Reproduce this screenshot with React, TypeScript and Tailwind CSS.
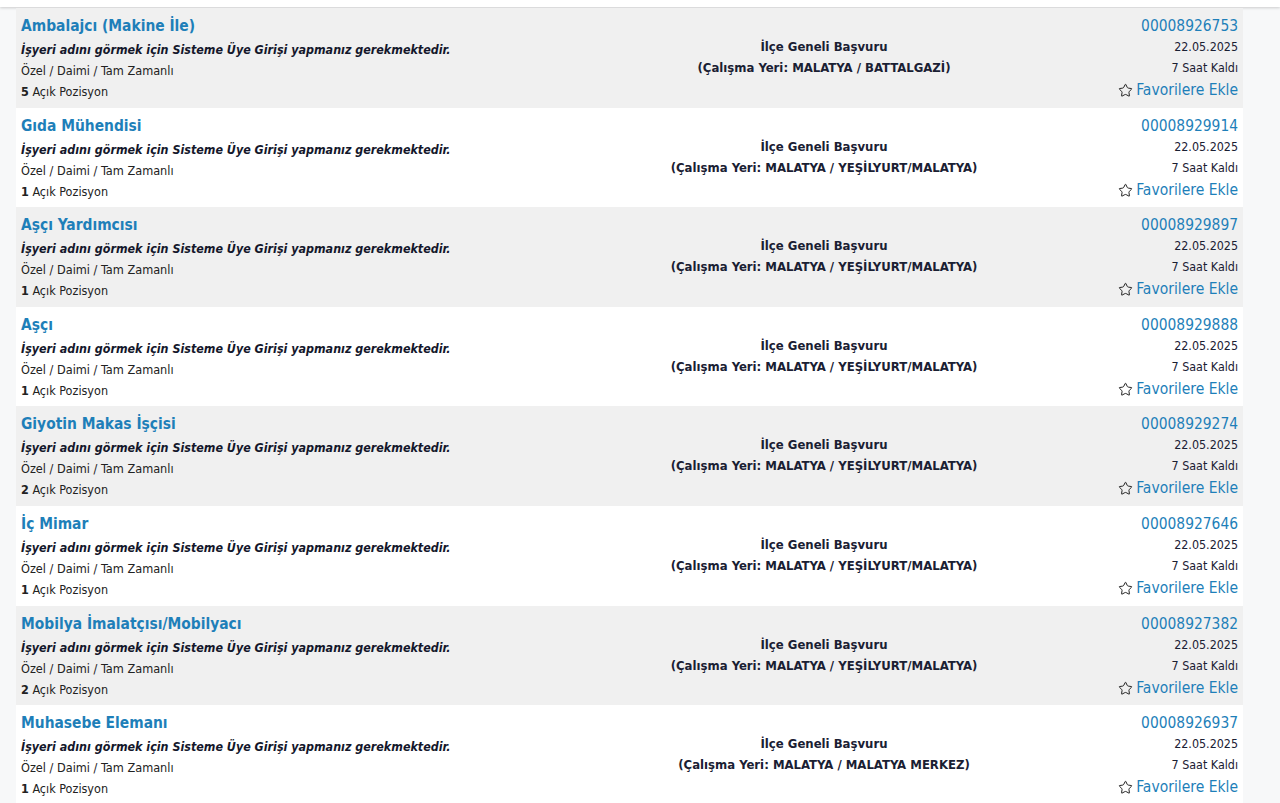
import { Star } from "lucide-react";

type Job = {
  title: string;
  count: number;
  place: string;
  id: string;
};

const JOBS: Job[] = [
  { title: "Ambalajcı (Makine İle)", count: 5, place: "MALATYA / BATTALGAZİ", id: "00008926753" },
  { title: "Gıda Mühendisi", count: 1, place: "MALATYA / YEŞİLYURT/MALATYA", id: "00008929914" },
  { title: "Aşçı Yardımcısı", count: 1, place: "MALATYA / YEŞİLYURT/MALATYA", id: "00008929897" },
  { title: "Aşçı", count: 1, place: "MALATYA / YEŞİLYURT/MALATYA", id: "00008929888" },
  { title: "Giyotin Makas İşçisi", count: 2, place: "MALATYA / YEŞİLYURT/MALATYA", id: "00008929274" },
  { title: "İç Mimar", count: 1, place: "MALATYA / YEŞİLYURT/MALATYA", id: "00008927646" },
  { title: "Mobilya İmalatçısı/Mobilyacı", count: 2, place: "MALATYA / YEŞİLYURT/MALATYA", id: "00008927382" },
  { title: "Muhasebe Elemanı", count: 1, place: "MALATYA / MALATYA MERKEZ", id: "00008926937" },
];

function JobRow({ job, odd }: { job: Job; odd: boolean }) {
  return (
    <div
      className={
        "grid grid-cols-[592px_432px_1fr] h-[99.6px] " +
        (odd ? "bg-[#f0f0f0]" : "bg-white")
      }
    >
      {/* Left */}
      <div className="pl-[5px] pt-[8px]">
        <a href="#" className="block text-[15.4px] font-bold leading-[20px] text-[#1e7fb9]">
          {job.title}
        </a>
        <div className="mt-[3px] text-[12.4px] font-bold italic leading-[21px] text-[#14172b]">
          İşyeri adını görmek için Sisteme Üye Girişi yapmanız gerekmektedir.
        </div>
        <div className="text-[12.6px] leading-[21px] text-[#222]">Özel / Daimi / Tam Zamanlı</div>
        <div className="text-[12.5px] leading-[21px] text-[#222]">
          <b>{job.count}</b> Açık Pozisyon
        </div>
      </div>

      {/* Middle */}
      <div className="flex flex-col items-center pt-[28px] text-[13px] font-bold leading-[21px] text-[#1a2033]">
        <div className="font-semibold">İlçe Geneli Başvuru</div>
        <div>(Çalışma Yeri: {job.place})</div>
      </div>

      {/* Right */}
      <div className="flex flex-col items-end pr-[5px] pt-[8px] text-[12.4px] leading-[21px] text-[#1a2033]">
        <a href="#" className="text-[15.4px] leading-[20px] text-[#1e7fb9]">
          {job.id}
        </a>
        <div>22.05.2025</div>
        <div>7 Saat Kaldı</div>
        <a href="#" className="mt-[2px] flex items-center gap-[3px] text-[15.5px] leading-[21px] text-[#1e7fb9]">
          <Star size={15} strokeWidth={1.6} className="text-[#222]" />
          Favorilere Ekle
        </a>
      </div>
    </div>
  );
}

export default function App() {
  return (
    <div
      className="min-h-[803px] bg-[#f7f8f9] overflow-hidden"
      style={{ fontFamily: "Tahoma, 'DejaVu Sans Condensed', 'DejaVu Sans', sans-serif" }}
    >
      <div className="h-[7px] bg-white shadow-[0_1px_3px_rgba(0,0,0,0.18)]" />
      <div className="ml-[16px] w-[1227px] pt-[1px]">
        {JOBS.map((job, i) => (
          <JobRow key={job.id} job={job} odd={i % 2 === 0} />
        ))}
      </div>
    </div>
  );
}
